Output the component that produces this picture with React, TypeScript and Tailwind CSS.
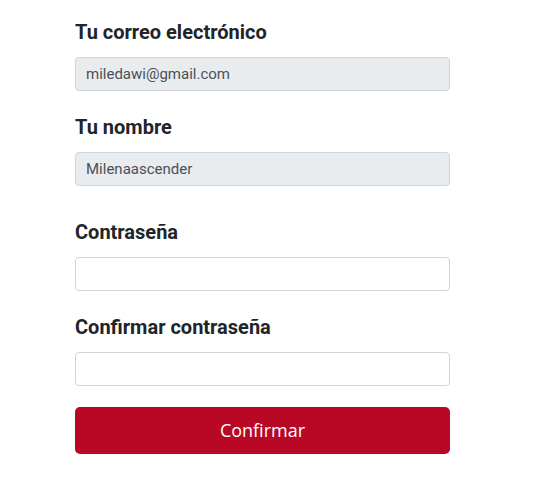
import React from 'react'

function Field({
  label,
  value,
  disabled,
  type = 'text',
  className = '',
}: {
  label: string
  value?: string
  disabled?: boolean
  type?: string
  className?: string
}) {
  return (
    <div className={className}>
      <label className="block text-[20px] font-bold leading-[24px] text-[#212529] mb-[13px]">{label}</label>
      <input
        type={type}
        readOnly={disabled}
        defaultValue={value}
        className={
          'block h-[34px] w-full rounded-[4px] border border-[#ced4da] px-[10px] text-[15px] text-[#495057] outline-none ' +
          (disabled ? 'bg-[#e9ecef]' : 'bg-white')
        }
      />
    </div>
  )
}

export default function App() {
  return (
    <div className="min-h-screen bg-white font-['Roboto',sans-serif]">
      <form className="ml-[75px] w-[375px] pt-[20px]" onSubmit={(e) => e.preventDefault()}>
        <Field label="Tu correo electrónico" value="miledawi@gmail.com" disabled />
        <Field label="Tu nombre" value="Milenaascender" disabled className="mt-[24px]" />
        <Field label="Contraseña" type="password" className="mt-[34px]" />
        <Field label="Confirmar contraseña" type="password" className="mt-[24px]" />
        <button
          type="submit"
          className="mt-[21px] h-[47px] w-full rounded-[5px] bg-[#b80826] text-[18px] text-white font-['Open_Sans',sans-serif]"
        >
          Confirmar
        </button>
      </form>
    </div>
  )
}
